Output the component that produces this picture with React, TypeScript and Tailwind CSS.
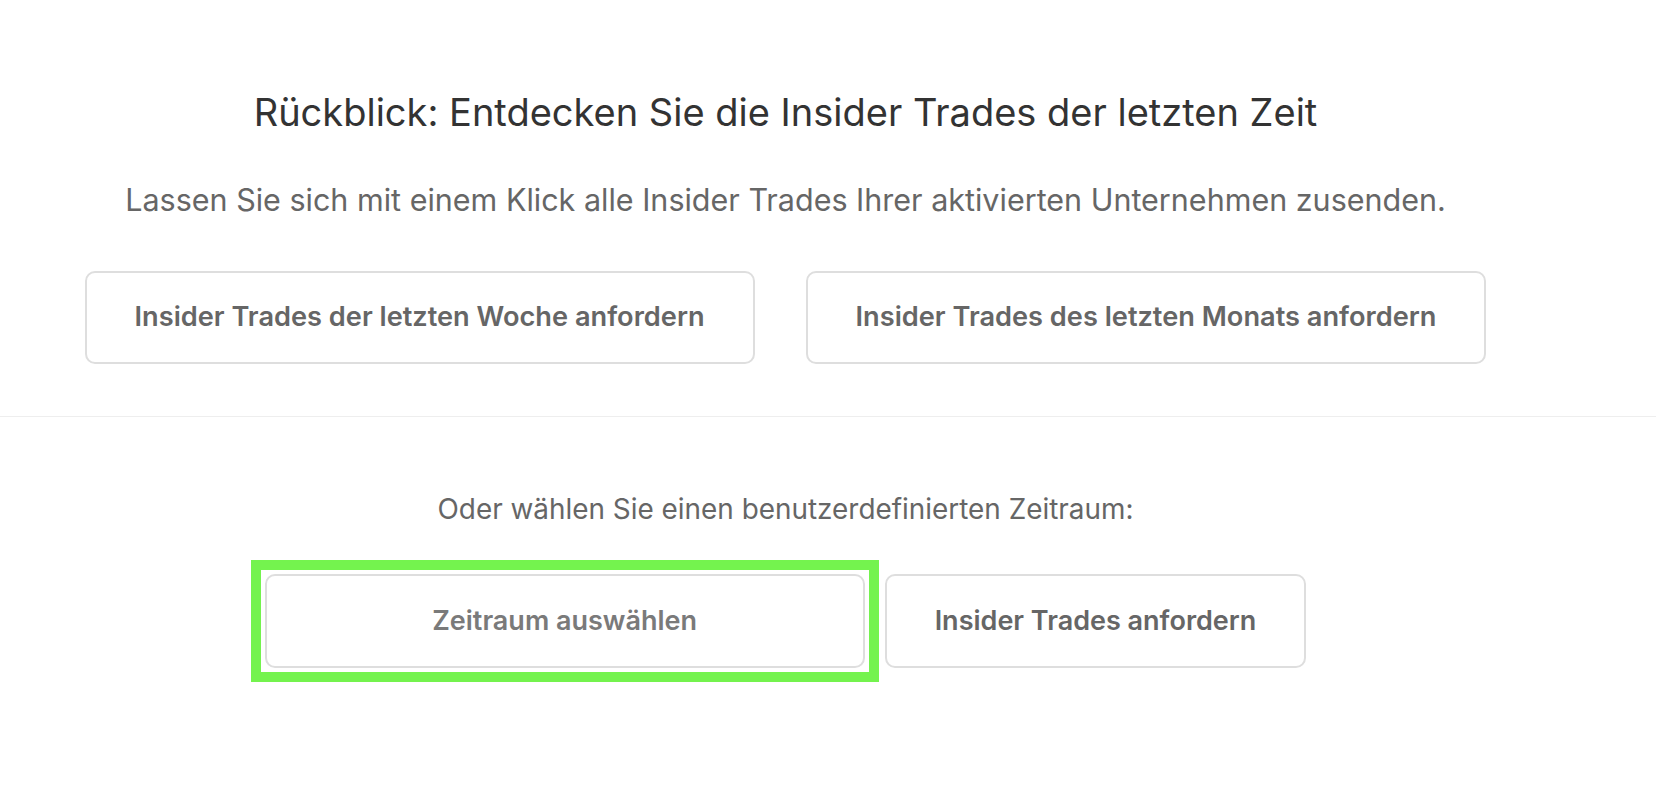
import React from "react";

const font = { fontFamily: "Inter, 'Liberation Sans', sans-serif" };

export default function App() {
  return (
    <div className="min-h-[810px] w-full bg-white" style={font}>
      <div className="flex w-[1571px] flex-col items-center pt-[84px]">
        <h1 className="text-[38px] font-normal leading-[56px] text-[#333333]">
          Rückblick: Entdecken Sie die Insider Trades der letzten Zeit
        </h1>
        <p className="mt-[40px] text-[30.5px] leading-[40px] text-[#666666]">
          Lassen Sie sich mit einem Klick alle Insider Trades Ihrer aktivierten Unternehmen zusenden.
        </p>
        <div className="mt-[51px] flex gap-[51px]">
          <button className="h-[93px] rounded-[10px] border-2 border-[#dedede] bg-white px-[48px] text-[27.2px] font-semibold text-[#666666]">
            Insider Trades der letzten Woche anfordern
          </button>
          <button className="h-[93px] rounded-[10px] border-2 border-[#dedede] bg-white px-[48px] text-[27.2px] font-semibold text-[#666666]">
            Insider Trades des letzten Monats anfordern
          </button>
        </div>
      </div>
      <div className="mt-[52px] h-px w-full bg-[#eeeeee]" />
      <div className="flex w-[1571px] flex-col items-center pt-[74px]">
        <p className="text-[27.9px] leading-[36px] text-[#666666]">
          Oder wählen Sie einen benutzerdefinierten Zeitraum:
        </p>
        <div className="mt-[47px] flex gap-[20px]">
          <div className="outline outline-[10px] outline-offset-[4px] outline-[#74f34e]">
            <button className="h-[94px] w-[600px] rounded-[10px] border-2 border-[#dedede] bg-white text-[27px] font-semibold text-[#7a7a7a]">
              Zeitraum auswählen
            </button>
          </div>
          <button className="h-[94px] rounded-[10px] border-2 border-[#dedede] bg-white px-[48px] text-[27px] font-semibold text-[#666666]">
            Insider Trades anfordern
          </button>
        </div>
      </div>
    </div>
  );
}
